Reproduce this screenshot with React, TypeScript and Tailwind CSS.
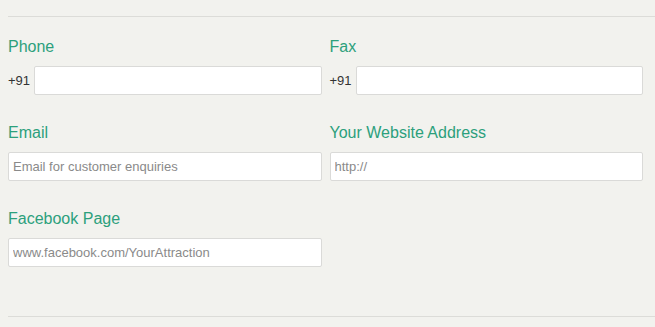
const font = { fontFamily: '"Liberation Sans", Arial, sans-serif' };

function Label({ children }: { children: React.ReactNode }) {
  return <div className="h-5 text-[16px] leading-5 text-[#2ca07c] mb-[9px]">{children}</div>;
}

function Field({ placeholder, prefix }: { placeholder?: string; prefix?: string }) {
  const input = (
    <input
      type="text"
      placeholder={placeholder}
      className="h-[29px] w-full min-w-0 rounded-[2px] border border-[#dadad8] bg-white px-1 text-[13px] text-[#333] placeholder:text-[#8a8a8a] outline-none"
    />
  );
  if (!prefix) return input;
  return (
    <div className="flex items-center gap-1">
      <span className="text-[13px] text-[#333]">{prefix}</span>
      {input}
    </div>
  );
}

export default function App() {
  return (
    <div className="min-h-[327px] w-[655px] bg-[#f2f2ee] pt-4 pl-2" style={font}>
      <div className="border-t border-[#dcdcd8]">
        <div className="grid grid-cols-2 gap-x-2 gap-y-7 pt-5 pr-3 pb-[49px]">
          <div>
            <Label>Phone</Label>
            <Field prefix="+91" />
          </div>
          <div>
            <Label>Fax</Label>
            <Field prefix="+91" />
          </div>
          <div>
            <Label>Email</Label>
            <Field placeholder="Email for customer enquiries" />
          </div>
          <div>
            <Label>Your Website Address</Label>
            <Field placeholder="http://" />
          </div>
          <div>
            <Label>Facebook Page</Label>
            <Field placeholder="www.facebook.com/YourAttraction" />
          </div>
        </div>
        <div className="border-t border-[#dcdcd8]" />
      </div>
    </div>
  );
}
